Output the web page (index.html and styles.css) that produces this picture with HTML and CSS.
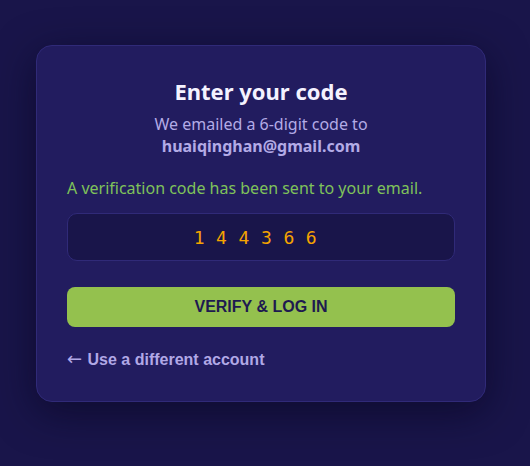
FILE: index.html
```html
<!DOCTYPE html>
<html lang="en">
<head>
    <meta charset="UTF-8">
    <meta name="viewport" content="width=device-width, initial-scale=1.0">
    <title>Enter your code</title>
    <link rel="stylesheet" href="styles.css">
</head>
<body>
    <div class="verify-card">
        <h1>Enter your code</h1>
        <p class="subtitle">We emailed a 6-digit code to<br><strong>huaiqinghan@gmail.com</strong></p>

        <p class="status-message">A verification code has been sent to your email.</p>

        <form id="verifyForm">
            <input type="text" id="code" class="code-input" value="144366" maxlength="6">
            <button type="submit">VERIFY &amp; LOG IN</button>
        </form>

        <a class="back-link" href="#"><span class="arrow">&larr;</span> Use a different account</a>
    </div>
</body>
</html>
```

FILE: styles.css
```css
body {
    font-family: "Segoe UI", "Noto Sans", sans-serif;
    margin: 0;
    padding: 45px 0 0 36px;
    min-height: 100vh;
    box-sizing: border-box;
    background-color: #19154a;
}

.verify-card {
    width: 450px;
    box-sizing: border-box;
    background-color: #221c5f;
    border: 1px solid #302a78;
    border-radius: 16px;
    padding: 32px 30px 31px;
    box-shadow: 0 10px 40px rgba(5, 3, 25, 0.55);
}

h1 {
    margin: 0;
    text-align: center;
    color: #f4f2ff;
    font-size: 22px;
    line-height: 26px;
    font-weight: 700;
}

.subtitle {
    margin: 9px 0 0;
    text-align: center;
    color: #b3abe6;
    font-size: 16px;
    line-height: 22px;
}

.subtitle strong {
    font-weight: 700;
}

.status-message {
    margin: 20px 0 0;
    color: #7fc25a;
    font-size: 16px;
    line-height: 22px;
}

#verifyForm {
    margin-top: 14px;
}

.code-input {
    display: block;
    width: 100%;
    height: 48px;
    box-sizing: border-box;
    background-color: #19154a;
    border: 1px solid #302a78;
    border-radius: 10px;
    color: #f5a300;
    font-family: "DejaVu Sans Mono", monospace;
    font-size: 18px;
    letter-spacing: 11.6px;
    text-align: center;
    padding: 0;
    outline: none;
}

button {
    display: block;
    width: 100%;
    height: 40px;
    margin-top: 26px;
    background-color: #94c14e;
    color: #1e1a50;
    border: none;
    border-radius: 8px;
    font-family: "Liberation Sans", Arial, sans-serif;
    font-size: 16px;
    font-weight: 700;
    cursor: pointer;
}

.back-link {
    display: inline-block;
    margin-top: 23px;
    color: #b1a8e6;
    font-family: "Liberation Sans", Arial, sans-serif;
    font-size: 16px;
    font-weight: 700;
    line-height: 20px;
    text-decoration: none;
}

.back-link .arrow {
    font-family: "DejaVu Sans", sans-serif;
    font-size: 18px;
    line-height: 16px;
    font-weight: 400;
    margin-right: 1px;
}
```
